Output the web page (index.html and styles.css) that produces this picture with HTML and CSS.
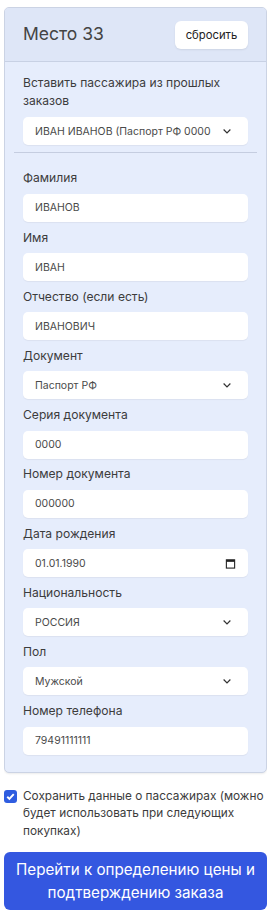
FILE: index.html
```html
<!DOCTYPE html>
<html lang="ru">
<head>
	<meta charset="UTF-8">
	<title>Место 33</title>
	<link rel="stylesheet" href="styles.css">
</head>
<body>
	<section class="seat">
		<header class="seat-head">
			<h2>Место 33</h2>
			<button class="btn-reset">сбросить</button>
		</header>
		<div class="seat-body">
			<div class="field">
				<label>Вставить пассажира из прошлых заказов</label>
				<div class="select">
					<select>
						<option>ИВАН ИВАНОВ (Паспорт РФ 0000 000000)</option>
					</select>
					<svg viewBox="0 0 16 16"><path d="M3.5 6l4.5 4.5L12.5 6"/></svg>
				</div>
			</div>
			<hr>
			<div class="field">
				<label>Фамилия</label>
				<input type="text" value="ИВАНОВ">
			</div>
			<div class="field">
				<label>Имя</label>
				<input type="text" value="ИВАН">
			</div>
			<div class="field">
				<label>Отчество (если есть)</label>
				<input type="text" value="ИВАНОВИЧ">
			</div>
			<div class="field">
				<label>Документ</label>
				<div class="select">
					<select><option>Паспорт РФ</option></select>
					<svg viewBox="0 0 16 16"><path d="M3.5 6l4.5 4.5L12.5 6"/></svg>
				</div>
			</div>
			<div class="field">
				<label>Серия документа</label>
				<input type="text" value="0000">
			</div>
			<div class="field">
				<label>Номер документа</label>
				<input type="text" value="000000">
			</div>
			<div class="field">
				<label>Дата рождения</label>
				<div class="date">
					<input type="text" value="01.01.1990">
					<svg viewBox="0 0 12 12"><rect x="1.5" y="2" width="9" height="9" fill="none" stroke="#222" stroke-width="1.2"/><rect x="1.5" y="2" width="9" height="2.2" fill="#222"/></svg>
				</div>
			</div>
			<div class="field">
				<label>Национальность</label>
				<div class="select">
					<select><option>РОССИЯ</option></select>
					<svg viewBox="0 0 16 16"><path d="M3.5 6l4.5 4.5L12.5 6"/></svg>
				</div>
			</div>
			<div class="field">
				<label>Пол</label>
				<div class="select">
					<select><option>Мужской</option></select>
					<svg viewBox="0 0 16 16"><path d="M3.5 6l4.5 4.5L12.5 6"/></svg>
				</div>
			</div>
			<div class="field">
				<label>Номер телефона</label>
				<input type="text" value="79491111111">
			</div>
		</div>
	</section>

	<label class="save">
		<span class="check">
			<svg viewBox="0 0 12 12"><path d="M3 6.2l2 2 4-4.4"/></svg>
		</span>
		<span>Сохранить данные о пассажирах (можно будет использовать при следующих покупках)</span>
	</label>

	<button class="btn-go">Перейти к определению цены и подтверждению заказа</button>
</body>
</html>
```

FILE: styles.css
```css
body {
	margin: 7px 4px;
	font-family: Inter, "Noto Sans", sans-serif;
	color: #3a3a3a;
	background: #fff;
}

/* section.seat */
section.seat {
	background-color: #e6edfc;
	border: 1px solid #cbd3e4;
	border-radius: 5px;
	box-shadow: 0 1px 2px rgba(0,0,0,.08);
	overflow: hidden;
}
.seat-head {
	background-color: #dee6f7;
	border-bottom: 1px solid #c8d1e4;
	display: flex;
	align-items: center;
	justify-content: space-between;
	height: 53px;
	padding: 0 18px;
}
.seat-head h2 {
	margin: 0 0 2px;
	font-size: 17.5px;
	font-weight: 400;
	color: #444;
}
.btn-reset {
	background: #fff;
	border: none;
	border-radius: 6px;
	box-shadow: 0 1px 2px rgba(0,0,0,.08);
	color: #222;
	font: 11.3px Inter, sans-serif;
	height: 28px;
	width: 73px;
	padding: 0;
}

.seat-body {
	display: flex;
	flex-direction: column;
	gap: 6.7px;
	padding: 12px 18px 17px;
}
.seat-body hr {
	border: none;
	border-top: 1px solid #c5cde0;
	margin: 0 -9px 10px;
	width: auto;
	align-self: stretch;
}
.field {
	display: flex;
	flex-direction: column;
}
.field label {
	font-size: 12.1px;
	line-height: 17.5px;
	margin-bottom: 7px;
	color: #3c3c3c;
}
.field:first-child label {
	margin-bottom: 8px;
}
.field input,
.field select,
.date {
	background: #fff;
	border: none;
	border-radius: 5px;
	box-shadow: 0 1px 1px rgba(0,0,0,.05);
	box-sizing: border-box;
	color: #4a4a4a;
	font: 10.5px Inter, sans-serif;
	height: 28px;
	outline: none;
	padding: 0 12px;
	width: 100%;
}
.select {
	position: relative;
}
.field select {
	appearance: none;
	-webkit-appearance: none;
	padding-right: 36px;
}
.select svg {
	position: absolute;
	right: 15px;
	top: 8px;
	width: 12px;
	height: 12px;
	fill: none;
	stroke: #333;
	stroke-width: 1.6;
	pointer-events: none;
}
.date {
	display: flex;
	align-items: center;
	padding-right: 12px;
}
.date input {
	padding: 0;
	box-shadow: none;
	flex: 1;
	min-width: 0;
}
.date svg {
	width: 11px;
	height: 11px;
}

/* label.save */
label.save {
	display: flex;
	gap: 6px;
	font-size: 11.8px;
	line-height: 17.5px;
	margin-top: 15px;
	color: #3c3c3c;
}
.check {
	flex: none;
	background: #2f5de0;
	border-radius: 3px;
	width: 13px;
	height: 13px;
	margin-top: 2px;
	display: flex;
}
.check svg {
	fill: none;
	stroke: #fff;
	stroke-width: 1.8;
}

.btn-go {
	background: #3457e0;
	border: none;
	border-radius: 6px;
	color: #fff;
	display: block;
	font: 15.2px/23.5px Inter, sans-serif;
	margin-top: 12px;
	padding: 5.5px 10px;
	width: 100%;
}
```
